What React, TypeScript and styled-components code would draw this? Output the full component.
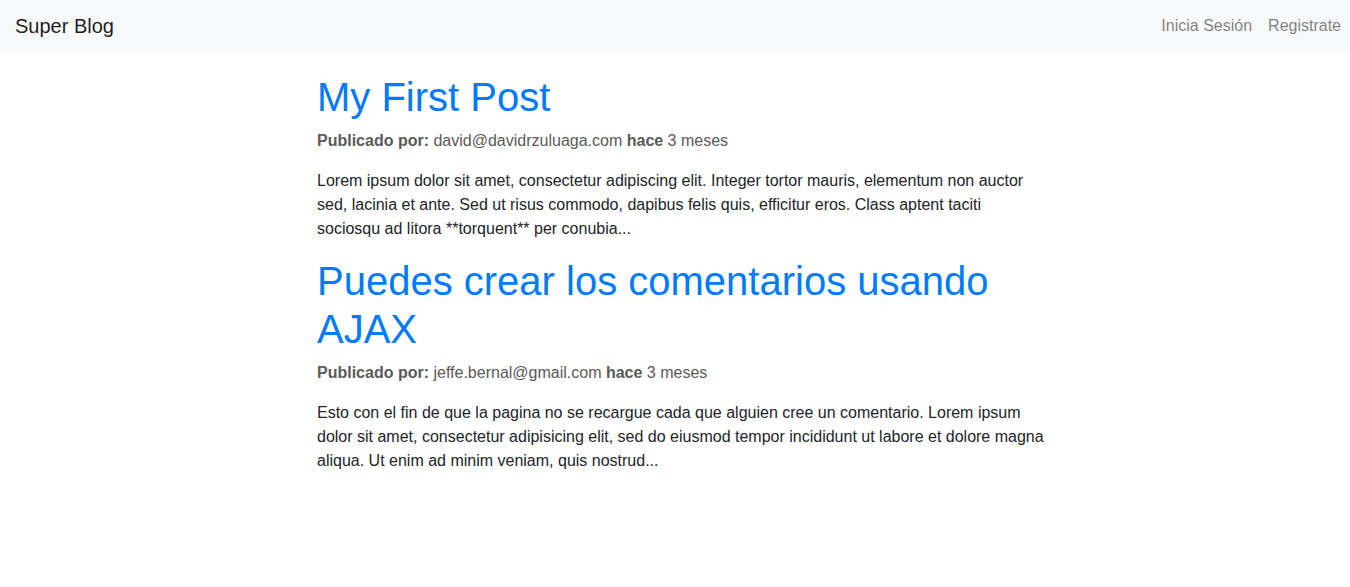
import React from "react";
import styled, { createGlobalStyle } from "styled-components";

const Global = createGlobalStyle`
  html, body { margin: 0; padding: 0; background: #fff; }
  body {
    font-family: "Liberation Sans", Arial, sans-serif;
    font-size: 16px;
    line-height: 1.5;
    color: #212529;
  }
`;

const Navbar = styled.nav`
  display: flex;
  align-items: center;
  justify-content: space-between;
  height: 52px;
  padding: 0 1px 0 15px;
  background: #f8f9fa;
`;

const Brand = styled.a`
  font-size: 20px;
  line-height: 30px;
  color: rgba(0, 0, 0, 0.9);
  text-decoration: none;
`;

const NavLinks = styled.ul`
  display: flex;
  list-style: none;
  margin: 0;
  padding: 0;
`;

const NavLink = styled.a`
  display: block;
  padding: 8px;
  color: rgba(0, 0, 0, 0.5);
  text-decoration: none;
`;

const Main = styled.main`
  padding: 21px 0 0 317px;
  width: 729px;
`;

const Post = styled.article`
  margin-bottom: 16px;
`;

const Title = styled.a`
  display: block;
  font-size: 40px;
  font-weight: 500;
  line-height: 48px;
  color: #007bff;
  text-decoration: none;
  margin-bottom: 8px;
`;

const Meta = styled.div`
  color: #5a5a5a;
  margin-bottom: 16px;
`;

const Strong = styled.b`
  font-weight: 700;
`;

const Body = styled.p`
  margin: 0;
`;

const posts = [
  {
    title: "My First Post",
    author: "david@davidrzuluaga.com",
    body:
      "Lorem ipsum dolor sit amet, consectetur adipiscing elit. Integer tortor mauris, elementum non auctor sed, lacinia et ante. Sed ut risus commodo, dapibus felis quis, efficitur eros. Class aptent taciti sociosqu ad litora **torquent** per conubia...",
  },
  {
    title: "Puedes crear los comentarios usando AJAX",
    author: "jeffe.bernal@gmail.com",
    body:
      "Esto con el fin de que la pagina no se recargue cada que alguien cree un comentario. Lorem ipsum dolor sit amet, consectetur adipisicing elit, sed do eiusmod tempor incididunt ut labore et dolore magna aliqua. Ut enim ad minim veniam, quis nostrud...",
  },
];

export default function App() {
  return (
    <>
      <Global />
      <Navbar>
        <Brand href="#">Super Blog</Brand>
        <NavLinks>
          <li>
            <NavLink href="#">Inicia Sesión</NavLink>
          </li>
          <li>
            <NavLink href="#">Registrate</NavLink>
          </li>
        </NavLinks>
      </Navbar>
      <Main>
        {posts.map((p) => (
          <Post key={p.title}>
            <Title href="#">{p.title}</Title>
            <Meta>
              <Strong>Publicado por:</Strong> {p.author} <Strong>hace</Strong> 3 meses
            </Meta>
            <Body>{p.body}</Body>
          </Post>
        ))}
      </Main>
    </>
  );
}
